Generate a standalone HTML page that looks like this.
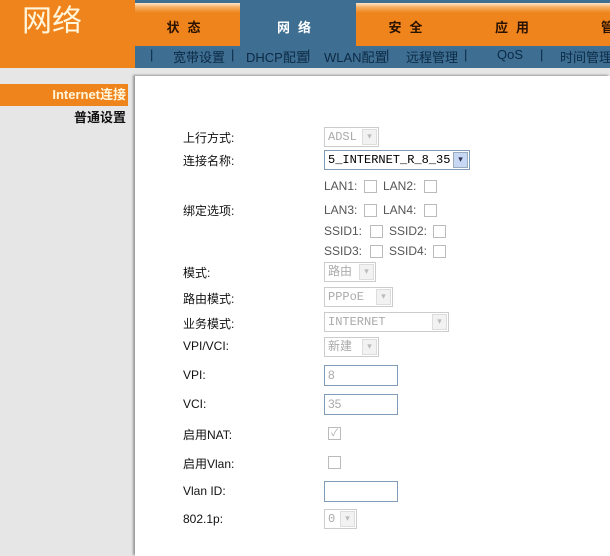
<!DOCTYPE html>
<html><head><meta charset="utf-8"><style>
*{margin:0;padding:0;box-sizing:border-box}
body{width:610px;height:556px;overflow:hidden;background:#e6e6e6;font-family:"Liberation Sans","Noto Sans CJK SC",sans-serif;font-size:12px;color:#000;position:relative}
.a{position:absolute}
#logo{left:0;top:0;width:135px;height:68px;background:#f0841c}
#logo span{position:absolute;left:22px;top:-4px;font-size:30px;color:#fff6dc;font-family:"Noto Sans CJK SC",sans-serif}
#tabs{left:135px;top:0;width:475px;height:68px;background:#3e6e92}
.tab{position:absolute;top:3px;height:43px;background:linear-gradient(#fde6cc 0,#f6b064 4px,#f0841c 10px,#f0841c);text-align:center;line-height:48px;font-weight:bold;font-size:13px;color:#2a1200;letter-spacing:8px;font-family:"Noto Sans CJK SC",sans-serif}
.sel{background:#3e6e92;color:#fff}
.sub{position:absolute;top:47px;color:#0c2a44;font-size:13px;white-space:nowrap;font-family:"Liberation Sans","Noto Sans CJK SC",sans-serif}
#content{left:135px;top:76px;width:475px;height:480px;background:#fff;box-shadow:-2px -1px 2px #999}
#side1{left:0;top:84px;width:128px;height:22px;background:#f0841c;color:#fff6dc;font-weight:bold;font-size:13px;text-align:right;padding-right:2px;line-height:22px}
#side2{left:0;top:107px;width:128px;text-align:right;padding-right:2px;font-weight:bold;font-size:13px;color:#111}
.l{position:absolute;left:183px;font-size:12px;color:#111}
.sl{position:absolute;left:324px;height:20px;border:1px solid #ccc;background:#fff;color:#aaa;font-family:"Liberation Mono","Noto Sans CJK SC",monospace;font-size:12px;line-height:18px;padding-left:3px}
.sl i{position:absolute;right:1px;top:1px;width:15px;height:16px;border:1px solid #ddd;background:#f2f2f2;color:#bbb;font-style:normal;font-size:9px;text-align:center;line-height:15px}
.in{position:absolute;left:324px;width:74px;height:21px;border:1px solid #7f9db9;color:#aaa;font-size:12px;line-height:19px;padding-left:3px}
.cb{position:absolute;width:13px;height:13px;border:1px solid #bbb;background:#fff}
.t{position:absolute;color:#555;font-size:12px}
</style></head><body>
<div class="a" id="logo"><span>网络</span></div>
<div class="a" id="tabs">
<div class="tab" style="left:0;width:105px">状态</div>
<div class="tab sel" style="left:105px;width:116px">网络</div>
<div class="tab" style="left:221px;width:107px">安全</div>
<div class="tab" style="left:328px;width:106px">应用</div>
<div class="tab" style="left:434px;width:60px;text-align:left;padding-left:32px">管</div>
</div>
<div class="sub" style="left:150px">|</div>
<div class="sub" style="left:173px">宽带设置</div>
<div class="sub" style="left:231px">|</div>
<div class="sub" style="left:246px">DHCP配置</div>
<div class="sub" style="left:307px">|</div>
<div class="sub" style="left:324px">WLAN配置</div>
<div class="sub" style="left:386px">|</div>
<div class="sub" style="left:406px">远程管理</div>
<div class="sub" style="left:464px">|</div>
<div class="sub" style="left:497px">QoS</div>
<div class="sub" style="left:540px">|</div>
<div class="sub" style="left:560px">时间管理</div>
<div class="a" id="content"></div>
<div class="a" id="side1">Internet连接</div>
<div class="a" id="side2">普通设置</div>

<div class="l" style="top:129px">上行方式:</div>
<div class="sl" style="top:127px;width:55px">ADSL<i>▾</i></div>
<div class="l" style="top:152px">连接名称:</div>
<div class="sl" style="top:150px;width:146px;border-color:#7f9db9;color:#000">5_INTERNET_R_8_35<i style="background:#c6d8f4;border-color:#9ab;color:#335">▾</i></div>
<div class="t" style="left:324px;top:179px">LAN1:</div><div class="cb" style="left:364px;top:180px"></div>
<div class="t" style="left:383px;top:179px">LAN2:</div><div class="cb" style="left:424px;top:180px"></div>
<div class="l" style="top:202px">绑定选项:</div>
<div class="t" style="left:324px;top:203px">LAN3:</div><div class="cb" style="left:364px;top:204px"></div>
<div class="t" style="left:383px;top:203px">LAN4:</div><div class="cb" style="left:424px;top:204px"></div>
<div class="t" style="left:324px;top:224px">SSID1:</div><div class="cb" style="left:370px;top:225px"></div>
<div class="t" style="left:389px;top:224px">SSID2:</div><div class="cb" style="left:433px;top:225px"></div>
<div class="t" style="left:324px;top:244px">SSID3:</div><div class="cb" style="left:370px;top:245px"></div>
<div class="t" style="left:389px;top:244px">SSID4:</div><div class="cb" style="left:433px;top:245px"></div>
<div class="l" style="top:264px">模式:</div>
<div class="sl" style="top:262px;width:52px">路由<i>▾</i></div>
<div class="l" style="top:290px">路由模式:</div>
<div class="sl" style="top:287px;width:69px">PPPoE<i>▾</i></div>
<div class="l" style="top:315px">业务模式:</div>
<div class="sl" style="top:312px;width:125px">INTERNET<i>▾</i></div>
<div class="l" style="top:339px">VPI/VCI:</div>
<div class="sl" style="top:337px;width:55px">新建<i>▾</i></div>
<div class="l" style="top:368px">VPI:</div>
<div class="in" style="top:365px">8</div>
<div class="l" style="top:397px">VCI:</div>
<div class="in" style="top:394px">35</div>
<div class="l" style="top:426px">启用NAT:</div>
<div class="cb" style="left:328px;top:427px;color:#aaa;font-size:10px;line-height:11px;text-align:center">✓</div>
<div class="l" style="top:455px">启用Vlan:</div>
<div class="cb" style="left:328px;top:456px"></div>
<div class="l" style="top:484px">Vlan ID:</div>
<div class="in" style="top:481px"></div>
<div class="l" style="top:512px">802.1p:</div>
<div class="sl" style="top:509px;width:33px">0<i>▾</i></div>
</body></html>
